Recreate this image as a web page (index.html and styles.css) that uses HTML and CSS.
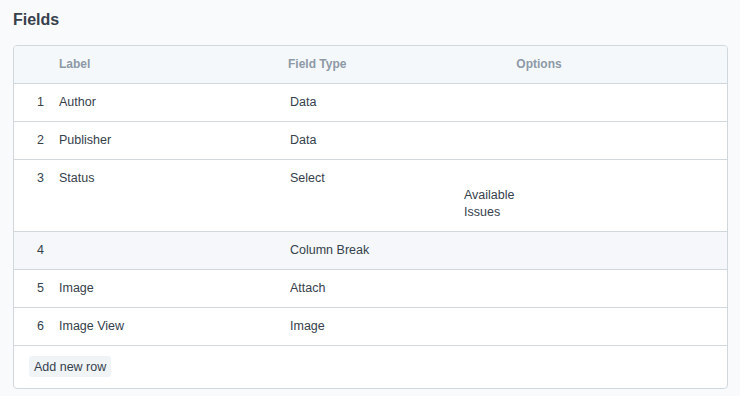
FILE: index.html
```html
<!DOCTYPE html>
<html lang="en">
  <head>
    <meta charset="UTF-8" />
    <title>Fields</title>
    <link rel="stylesheet" href="styles.css">
  </head>
  <body>
    <h4 class="title">Fields</h4>
    <div class="grid">
      <div class="row head">
        <div class="idx"></div>
        <div>Label</div>
        <div>Field Type</div>
        <div class="opt-head">Options</div>
      </div>
      <div class="row">
        <div class="idx">1</div>
        <div>Author</div>
        <div class="type">Data</div>
        <div></div>
      </div>
      <div class="row">
        <div class="idx">2</div>
        <div>Publisher</div>
        <div class="type">Data</div>
        <div></div>
      </div>
      <div class="row">
        <div class="idx">3</div>
        <div>Status</div>
        <div class="type">Select</div>
        <div class="options">Available<br>Issues</div>
      </div>
      <div class="row shaded">
        <div class="idx">4</div>
        <div></div>
        <div class="type">Column Break</div>
        <div></div>
      </div>
      <div class="row">
        <div class="idx">5</div>
        <div>Image</div>
        <div class="type">Attach</div>
        <div></div>
      </div>
      <div class="row">
        <div class="idx">6</div>
        <div>Image View</div>
        <div class="type">Image</div>
        <div></div>
      </div>
      <div class="footer">
        <button class="add-row">Add new row</button>
      </div>
    </div>
  </body>
</html>
```

FILE: styles.css
```css
* {
  box-sizing: border-box;
}

body {
  margin: 0;
  padding: 0 12px 0 13px;
  background: #f9fafb;
  font-family: "Liberation Sans", Arial, sans-serif;
  color: #36414c;
}

.title {
  margin: 0;
  padding-top: 11px;
  height: 45px;
  font-size: 16px;
  line-height: 18px;
  font-weight: bold;
  color: #36414c;
}

.grid {
  background: #fff;
  border: 1px solid #d1d8dd;
  border-radius: 4px;
  overflow: hidden;
}

.row {
  display: grid;
  grid-template-columns: 45px 229px 176px 150px 1fr;
  border-bottom: 1px solid #d1d8dd;
  font-size: 12.5px;
  line-height: 17px;
}

.row > div {
  padding: 10px 0;
}

.row .idx {
  text-align: right;
  padding-right: 15px;
}

.row .type {
  padding-left: 2px;
}

.row .options {
  padding-top: 27px;
}

.head {
  background: #f5f8fb;
  font-size: 12px;
  font-weight: bold;
  color: #8d99a6;
}

.head .opt-head {
  text-align: center;
}

.shaded {
  background: #f5f7fa;
}

.footer {
  height: 42px;
  padding: 10px 15px;
}

.add-row {
  height: 21px;
  padding: 0 5px;
  border: none;
  border-radius: 3px;
  background: #f0f4f7;
  color: #36414c;
  font-family: "Liberation Sans", Arial, sans-serif;
  font-size: 12.5px;
  cursor: pointer;
}
```
